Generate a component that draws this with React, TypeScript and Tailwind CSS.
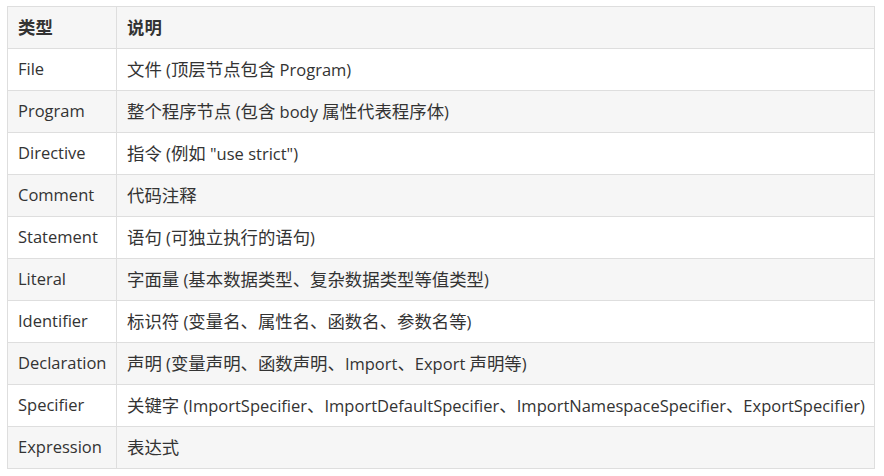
import React from "react";

const rows: [string, string][] = [
  ["File", "文件 (顶层节点包含 Program)"],
  ["Program", "整个程序节点 (包含 body 属性代表程序体)"],
  ["Directive", "指令 (例如 \"use strict\")"],
  ["Comment", "代码注释"],
  ["Statement", "语句 (可独立执行的语句)"],
  ["Literal", "字面量 (基本数据类型、复杂数据类型等值类型)"],
  ["Identifier", "标识符 (变量名、属性名、函数名、参数名等)"],
  ["Declaration", "声明 (变量声明、函数声明、Import、Export 声明等)"],
  ["Specifier", "关键字 (ImportSpecifier、ImportDefaultSpecifier、ImportNamespaceSpecifier、ExportSpecifier)"],
  ["Expression", "表达式"],
];

function Mixed({ text }: { text: string }) {
  const parts = text.split(/([\u3000-\u9fff\uff00-\uffef]+)/).filter((p) => p.length > 0);
  return (
    <>
      {parts.map((p, i) =>
        /[\u3000-\u9fff\uff00-\uffef]/.test(p) ? (
          <span key={i} className="text-[17.4px]">
            {p}
          </span>
        ) : (
          <span key={i}>{p}</span>
        )
      )}
    </>
  );
}

export default function App() {
  return (
    <div
      className="w-[884px] h-[476px] bg-white pt-[6px] pl-[7px] text-[#333] text-[16.5px]"
      style={{ fontFamily: '"Open Sans", "Noto Sans CJK SC", sans-serif' }}
    >
      <table className="border-collapse w-[868px] table-fixed">
        <colgroup>
          <col className="w-[109px]" />
          <col />
        </colgroup>
        <thead>
          <tr className="bg-[#f6f6f6] h-[42px]">
            <th className="border border-[#dedede] px-[10px] text-left font-bold leading-none">
              <Mixed text="类型" />
            </th>
            <th className="border border-[#dedede] px-[10px] text-left font-bold leading-none">
              <Mixed text="说明" />
            </th>
          </tr>
        </thead>
        <tbody>
          {rows.map(([a, b], i) => (
            <tr key={a} className={`h-[42px] ${i % 2 === 1 ? "bg-[#f6f6f6]" : "bg-white"}`}>
              <td className="border border-[#dedede] px-[10px] whitespace-nowrap leading-none">{a}</td>
              <td className="border border-[#dedede] px-[10px] whitespace-nowrap leading-none">
                <Mixed text={b} />
              </td>
            </tr>
          ))}
        </tbody>
      </table>
    </div>
  );
}
